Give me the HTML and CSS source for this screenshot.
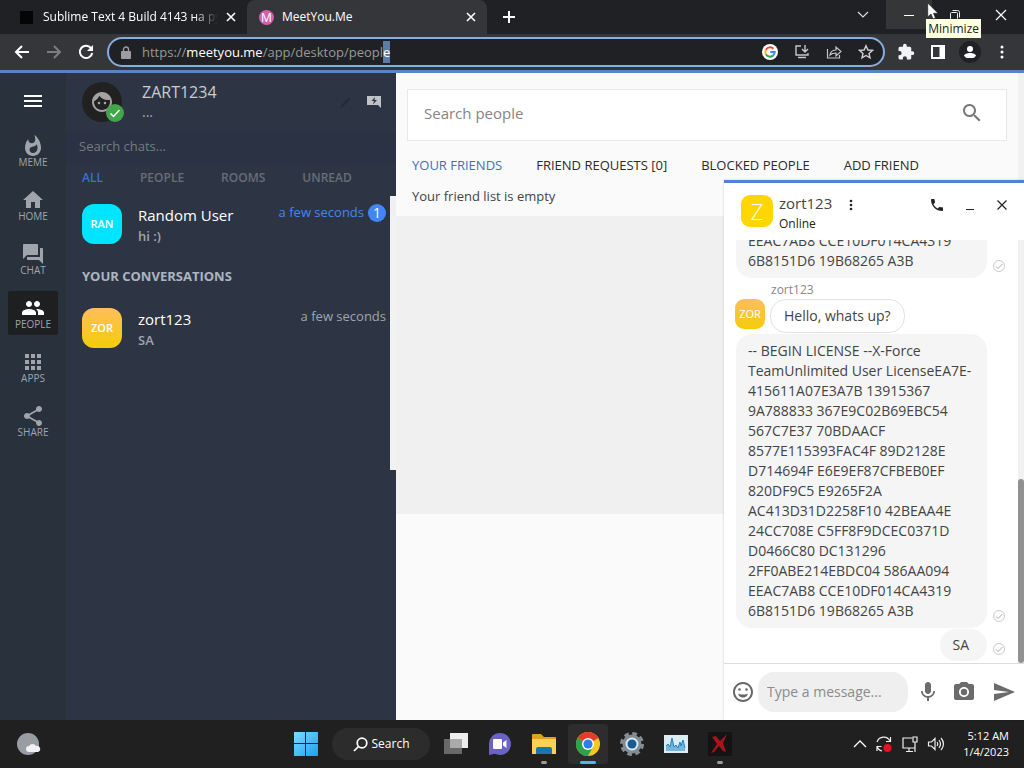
FILE: index.html
```html
<!DOCTYPE html>
<html lang="en">
<head>
  <meta charset="UTF-8">
  <title>MeetYou.Me</title>
  <link rel="stylesheet" href="styles.css">
</head>
<body>
  <!-- browser tabs -->
  <div class="tabstrip">
    <div class="tab">
      <span class="favicon dark"></span>
      <span class="tab-title fade">Sublime Text 4 Build 4143 на русском</span>
      <button class="tab-close" aria-label="Close tab"><svg width="10" height="10" viewBox="0 0 10 10"><path d="M1 1l8 8M9 1L1 9" stroke="#fff" stroke-width="1.6"/></svg></button>
    </div>
    <div class="tab active">
      <span class="favicon pink">M</span>
      <span class="tab-title">MeetYou.Me</span>
      <button class="tab-close" aria-label="Close tab"><svg width="10" height="10" viewBox="0 0 10 10"><path d="M1 1l8 8M9 1L1 9" stroke="#fff" stroke-width="1.6"/></svg></button>
    </div>
    <button class="new-tab" aria-label="New tab"><svg width="12" height="12" viewBox="0 0 12 12"><path d="M6 0v12M0 6h12" stroke="#fff" stroke-width="2"/></svg></button>
    <div class="window-buttons">
      <button aria-label="Search tabs"><svg width="12" height="12" viewBox="0 0 12 12" fill="none"><path d="M1 3l5 5 5-5" stroke="#ddd" stroke-width="1.2"/></svg></button>
      <button class="hovered" aria-label="Minimize"><svg width="12" height="12" viewBox="0 0 12 12"><path d="M1 6.500h10" stroke="#fff"/></svg></button>
      <button aria-label="Restore"><svg width="12" height="12" viewBox="0 0 12 12" fill="none" stroke="#eee"><rect x="1.500" y="3.500" width="7" height="7" rx="1"/><path d="M3.500 1.500h5a2 2 0 0 1 2 2v5"/></svg></button>
      <button aria-label="Close"><svg width="12" height="12" viewBox="0 0 12 12"><path d="M1 1l10 10M11 1L1 11" stroke="#fff" stroke-width="1.200"/></svg></button>
      <span class="tooltip">Minimize</span>
      <svg class="cursor" width="13" height="18" viewBox="0 0 13 18"><path d="M.7 1v14l3.300-3 2 5 2.500-1-2-4.700h4.600z" fill="#fff" stroke="#222" stroke-width=".7"/></svg>
    </div>
  </div>

  <div class="toolbar">
    <button aria-label="Back"><svg width="16" height="16" viewBox="0 0 16 16" fill="none" stroke="#fff" stroke-width="2"><path d="M15 8H2M8 2L2 8l6 6"/></svg></button>
    <button aria-label="Forward"><svg width="16" height="16" viewBox="0 0 16 16" fill="none" stroke="#7b7d80" stroke-width="2"><path d="M1 8h13M8 2l6 6-6 6"/></svg></button>
    <button aria-label="Reload"><svg width="16" height="16" viewBox="0 0 16 16" fill="none"><path d="M13.300 4.500A6.200 6.200 0 1 0 14.200 9" stroke="#fff" stroke-width="2"/><path d="M15 1v6H9z" fill="#fff"/></svg></button>
    <div class="address">
      <svg width="10" height="13" viewBox="0 0 10 13"><rect y="5" width="10" height="8" rx="1" fill="#9b9da1"/><path d="M2.500 5V3.500a2.500 2.500 0 0 1 5 0V5" fill="none" stroke="#9b9da1" stroke-width="1.400"/></svg>
      <div class="url" role="textbox" contenteditable="true" spellcheck="false" aria-label="Address">https://<b>meetyou.me</b>/app/desktop/peopl<mark>e</mark></div>
      <button aria-label="Google"><svg width="16" height="16" viewBox="0 0 16 16" fill="none" stroke-width="2"><circle cx="8" cy="8" r="8" fill="#fff"/><path d="M11.300 4.700A4.700 4.700 0 0 0 3.900 5.700" stroke="#ea4335"/><path d="M3.900 5.700a4.700 4.700 0 0 0 0 4.600" stroke="#fbbc05"/><path d="M3.900 10.300a4.700 4.700 0 0 0 7 1.300" stroke="#34a853"/><path d="M10.900 11.600A4.700 4.700 0 0 0 12.700 8H8.300" stroke="#4285f4"/></svg></button>
      <button aria-label="Install"><svg width="16" height="16" viewBox="0 0 16 16" fill="none" stroke="#c4c7c9" stroke-width="1.400"><path d="M7 2H2v9h12V9M11 1v6M8 5l3 3 3-3M4 13.500h8"/></svg></button>
      <button aria-label="Share page"><svg width="16" height="16" viewBox="0 0 16 16" fill="none" stroke="#c4c7c9" stroke-width="1.200"><path d="M1.500 5v9h12v-3M4 11c.5-3.500 3-5 6-5V3l5 4.500L10 12V9c-3 0-4.500.5-6 2z"/></svg></button>
      <button aria-label="Bookmark"><svg width="16" height="16" viewBox="0 0 16 16" fill="none" stroke="#d0d2d4" stroke-width="1.400"><path d="M8 1.800l1.900 4.200 4.500.4-3.400 3 1 4.500L8 11.500l-4 2.400 1-4.500-3.400-3 4.500-.4z"/></svg></button>
    </div>
    <button aria-label="Extensions"><svg width="18" height="18" viewBox="0 0 24 24" fill="#f1f3f4"><path d="M20.500 11H19V7a2 2 0 0 0-2-2h-4V3.500a2.500 2.500 0 0 0-5 0V5H4a2 2 0 0 0-2 2v3.800h1.500a2.700 2.700 0 0 1 0 5.400H2V20a2 2 0 0 0 2 2h3.800v-1.500a2.700 2.700 0 0 1 5.400 0V22H17a2 2 0 0 0 2-2v-4h1.500a2.500 2.500 0 0 0 0-5z"/></svg></button>
    <button aria-label="Side panel"><svg width="14" height="14" viewBox="0 0 14 14"><path d="M1 1h12v12H1z" fill="none" stroke="#fff" stroke-width="2"/><path d="M8.500 1H13v12H8.500z" fill="#fff"/></svg></button>
    <button class="profile" aria-label="Profile"><svg width="14" height="14" viewBox="0 0 14 14" fill="#fff"><circle cx="7" cy="4" r="3"/><path d="M1 13v-2c0-2 3-3 6-3s6 1 6 3v2z"/></svg></button>
    <button aria-label="Menu"><svg width="4" height="14" viewBox="0 0 4 14" fill="#fff"><circle cx="2" cy="2" r="1.500"/><circle cx="2" cy="7" r="1.500"/><circle cx="2" cy="12" r="1.500"/></svg></button>
  </div>

  <div class="app">
    <nav class="rail">
      <button class="burger" aria-label="Menu"><span></span><span></span><span></span></button>
      <a href="#"><svg viewBox="0 0 24 24"><path d="M13.500.67s.74 2.650.74 4.800c0 2.060-1.350 3.730-3.410 3.730-2.070 0-3.630-1.670-3.630-3.730l.03-.36C5.210 7.510 4 10.620 4 14c0 4.420 3.580 8 8 8s8-3.580 8-8C20 8.610 17.410 3.800 13.500.67zM11.710 19c-1.780 0-3.220-1.400-3.220-3.140 0-1.620 1.050-2.760 2.810-3.120 1.770-.36 3.600-1.210 4.620-2.580.39 1.290.59 2.650.59 4.040 0 2.650-2.150 4.800-4.800 4.800z"/></svg>MEME</a>
      <a href="#"><svg viewBox="0 0 24 24"><path d="M10 20v-6h4v6h5v-8h3L12 3 2 12h3v8z"/></svg>HOME</a>
      <a href="#"><svg viewBox="0 0 24 24"><path d="M21 6h-2v9H6v2c0 .55.45 1 1 1h11l4 4V7c0-.55-.45-1-1-1zm-4 6V3c0-.55-.45-1-1-1H3c-.55 0-1 .45-1 1v14l4-4h10c.55 0 1-.45 1-1z"/></svg>CHAT</a>
      <a href="#" class="current"><svg viewBox="0 0 24 24"><path d="M16 11c1.660 0 2.990-1.340 2.990-3S17.660 5 16 5s-3 1.340-3 3 1.340 3 3 3zm-8 0c1.660 0 2.990-1.340 2.990-3S9.660 5 8 5 5 6.340 5 8s1.340 3 3 3zm0 2c-2.330 0-7 1.170-7 3.500V19h14v-2.500c0-2.330-4.670-3.500-7-3.500zm8 0c-.29 0-.62.02-.97.05 1.160.84 1.970 1.970 1.970 3.450V19h6v-2.500c0-2.330-4.670-3.500-7-3.500z"/></svg>PEOPLE</a>
      <a href="#"><svg viewBox="0 0 24 24"><path d="M4 8h4V4H4v4zm6 12h4v-4h-4v4zm-6 0h4v-4H4v4zm0-6h4v-4H4v4zm6 0h4v-4h-4v4zm6-10v4h4V4h-4zm-6 4h4V4h-4v4zm6 6h4v-4h-4v4zm0 6h4v-4h-4v4z"/></svg>APPS</a>
      <a href="#"><svg viewBox="0 0 24 24"><path d="M18 16.080c-.76 0-1.440.3-1.960.77L8.910 12.700c.05-.23.09-.46.09-.7s-.04-.47-.09-.7l7.050-4.110c.54.5 1.250.81 2.040.81 1.660 0 3-1.340 3-3s-1.340-3-3-3-3 1.340-3 3c0 .24.04.47.09.7L8.040 9.810C7.500 9.310 6.790 9 6 9c-1.660 0-3 1.340-3 3s1.340 3 3 3c.79 0 1.500-.31 2.040-.81l7.120 4.160c-.05.21-.08.43-.08.65 0 1.610 1.310 2.920 2.920 2.920s2.920-1.310 2.920-2.920-1.310-2.920-2.920-2.920z"/></svg>SHARE</a>
    </nav>

    <aside class="sidebar">
      <div class="me">
        <div class="me-avatar">
          <svg width="24" height="24" viewBox="0 0 24 24" fill="#a3a3a3"><path d="M9 11.750c-.69 0-1.250.56-1.250 1.250s.56 1.250 1.250 1.250 1.250-.56 1.250-1.250-.56-1.250-1.250-1.250zm6 0c-.69 0-1.250.56-1.250 1.250s.56 1.250 1.250 1.250 1.250-.56 1.250-1.250-.56-1.250-1.250-1.250zM12 2C6.480 2 2 6.480 2 12s4.480 10 10 10 10-4.480 10-10S17.520 2 12 2zm0 18c-4.410 0-8-3.590-8-8 0-.29.02-.58.05-.86 2.360-1.050 4.230-2.980 5.210-5.370C11.070 8.330 14.050 10 17.420 10c.78 0 1.530-.09 2.250-.26.21.71.33 1.470.33 2.260 0 4.410-3.590 8-8 8z"/></svg>
          <span class="online"><svg width="12" height="12" viewBox="0 0 12 12"><path d="M1.500 6.500l3 3 6-6.500" fill="none" stroke="#fff" stroke-width="1.500"/></svg></span>
        </div>
        <div class="me-text"><span class="me-name">ZART1234</span><span class="me-status">...</span></div>
        <button aria-label="Edit"><svg width="14" height="14" viewBox="0 0 14 14"><path d="M2 12l9-9" stroke="#222a33" stroke-width="2"/></svg></button>
        <button aria-label="Quick message"><svg width="16" height="14" viewBox="0 0 16 14"><path d="M1 1h14v12l-3-3H1z" fill="#c0c3c6"/><path d="M9 2L5.500 6H8l-1 3.500L11 5H8.500z" fill="#2d3545"/></svg></button>
      </div>
      <input class="search-chats" type="text" placeholder="Search chats..." aria-label="Search chats">
      <div class="chat-tabs">
        <button class="selected">ALL</button>
        <button>PEOPLE</button>
        <button>ROOMS</button>
        <button>UNREAD</button>
      </div>
      <div class="chat-list">
        <div class="chats">
          <div class="chat">
            <span class="square cyan">RAN</span>
            <div class="chat-text"><strong>Random User</strong><span>hi :)</span></div>
            <span class="time new">a few seconds</span>
            <span class="count">1</span>
          </div>
          <h2>YOUR CONVERSATIONS</h2>
          <div class="chat">
            <span class="square gold">ZOR</span>
            <div class="chat-text"><strong>zort123</strong><span>SA</span></div>
            <span class="time">a few seconds</span>
          </div>
        </div>
        <div class="track"></div>
      </div>
    </aside>

    <main class="people">
      <div class="people-search">
        <input type="text" placeholder="Search people" aria-label="Search people">
        <button aria-label="Search"><svg width="24" height="24" viewBox="0 0 24 24" fill="#777"><path d="M15.500 14h-.79l-.28-.27C15.410 12.590 16 11.110 16 9.500 16 5.910 13.090 3 9.500 3S3 5.910 3 9.500 5.910 16 9.500 16c1.610 0 3.090-.59 4.230-1.570l.27.28v.79l5 4.990L20.490 19l-4.990-5zm-6 0C7.010 14 5 11.990 5 9.500S7.010 5 9.500 5 14 7.010 14 9.500 11.990 14 9.500 14z"/></svg></button>
      </div>
      <div class="people-tabs">
        <button class="selected">YOUR FRIENDS</button>
        <button>FRIEND REQUESTS [0]</button>
        <button>BLOCKED PEOPLE</button>
        <button>ADD FRIEND</button>
      </div>
      <p class="empty">Your friend list is empty</p>
      <div class="placeholder"></div>
    </main>

    <!-- floating conversation -->
    <section class="popup">
      <header>
        <span class="square yellow">Z</span>
        <div class="who"><span class="who-name">zort123</span><span class="who-status">Online</span></div>
        <button aria-label="More"><svg width="4" height="12" viewBox="0 0 4 12" fill="#222"><circle cx="2" cy="2" r="1.300"/><circle cx="2" cy="6" r="1.300"/><circle cx="2" cy="10" r="1.300"/></svg></button>
        <button class="call" aria-label="Call"><svg width="16" height="16" viewBox="0 0 24 24" fill="#222"><path d="M6.620 10.790c1.440 2.830 3.760 5.140 6.590 6.590l2.200-2.200c.27-.27.67-.36 1.020-.24 1.120.37 2.330.57 3.570.57.55 0 1 .45 1 1V20c0 .55-.45 1-1 1-9.390 0-17-7.610-17-17 0-.55.45-1 1-1h3.500c.55 0 1 .45 1 1 0 1.250.2 2.450.57 3.570.11.35.03.74-.25 1.020l-2.200 2.200z"/></svg></button>
        <button aria-label="Minimize chat"><svg width="10" height="12" viewBox="0 0 10 12"><path d="M1 10.500h8" stroke="#222"/></svg></button>
        <button aria-label="Close chat"><svg width="10" height="10" viewBox="0 0 10 10"><path d="M.5.5l9 9M9.500.5l-9 9" stroke="#222" stroke-width="1.200"/></svg></button>
      </header>
      <div class="messages">
        <div class="thread">
          <div class="mine">
            <p class="bubble wide">EEAC7AB8 CCE10DF014CA4319
6B8151D6 19B68265 A3B</p>
            <svg class="seen" width="14" height="14" viewBox="0 0 14 14" fill="none" stroke="#aaa"><circle cx="7" cy="7" r="5.500" stroke="#ccc"/><path d="M4 7.500l2 2L10.500 5"/></svg>
          </div>
          <span class="sender">zort123</span>
          <div class="theirs">
            <span class="square gold small">ZOR</span>
            <p class="bubble">Hello, whats up?</p>
          </div>
          <div class="mine">
            <p class="bubble wide">-- BEGIN LICENSE --X-Force
TeamUnlimited User LicenseEA7E-
415611A07E3A7B 13915367
9A788833 367E9C02B69EBC54
567C7E37 70BDAACF
8577E115393FAC4F 89D2128E
D714694F E6E9EF87CFBEB0EF
820DF9C5 E9265F2A
AC413D31D2258F10 42BEAA4E
24CC708E C5FF8F9DCEC0371D
D0466C80 DC131296
2FF0ABE214EBDC04 586AA094
EEAC7AB8 CCE10DF014CA4319
6B8151D6 19B68265 A3B</p>
            <svg class="seen" width="14" height="14" viewBox="0 0 14 14" fill="none" stroke="#aaa"><circle cx="7" cy="7" r="5.500" stroke="#ccc"/><path d="M4 7.500l2 2L10.500 5"/></svg>
          </div>
          <div class="mine">
            <p class="bubble short">SA</p>
            <svg class="seen" width="14" height="14" viewBox="0 0 14 14" fill="none" stroke="#aaa"><circle cx="7" cy="7" r="5.500" stroke="#ccc"/><path d="M4 7.500l2 2L10.500 5"/></svg>
          </div>
        </div>
        <div class="scrollbar"><span></span></div>
      </div>
      <form class="compose">
        <button type="button" aria-label="Emoji"><svg width="24" height="24" viewBox="0 0 24 24" fill="#666"><path d="M11.990 2C6.470 2 2 6.480 2 12s4.470 10 9.990 10C17.520 22 22 17.520 22 12S17.520 2 11.990 2zM12 20c-4.420 0-8-3.580-8-8s3.580-8 8-8 8 3.580 8 8-3.580 8-8 8z"/><circle cx="8.500" cy="9.500" r="1.300"/><circle cx="15.500" cy="9.500" r="1.300"/><path d="M7 13.500c1.500 1.300 8.500 1.300 10 0-.5 2.500-2.500 4-5 4s-4.500-1.500-5-4z"/></svg></button>
        <input type="text" placeholder="Type a message..." aria-label="Type a message">
        <button type="button" aria-label="Record"><svg width="24" height="24" viewBox="0 0 24 24" fill="#6b6b6b"><path d="M12 14c1.660 0 2.990-1.340 2.990-3L15 5c0-1.660-1.340-3-3-3S9 3.340 9 5v6c0 1.660 1.340 3 3 3zm5.300-3c0 3-2.540 5.100-5.300 5.100S6.700 14 6.700 11H5c0 3.410 2.720 6.230 6 6.720V21h2v-3.280c3.280-.48 6-3.300 6-6.720h-1.700z"/></svg></button>
        <button type="button" aria-label="Photo"><svg width="24" height="24" viewBox="0 0 24 24" fill="#6b6b6b"><circle cx="12" cy="12" r="3.200"/><path d="M9 2L7.170 4H4c-1.100 0-2 .9-2 2v12c0 1.100.9 2 2 2h16c1.100 0 2-.9 2-2V6c0-1.100-.9-2-2-2h-3.170L15 2H9zm3 15c-2.760 0-5-2.240-5-5s2.240-5 5-5 5 2.240 5 5-2.240 5-5 5z"/></svg></button>
        <button type="submit" aria-label="Send"><svg width="24" height="24" viewBox="0 0 24 24" fill="#6b6b6b"><path d="M2.010 21L23 12 2.010 3 2 10l15 2-15 2z"/></svg></button>
      </form>
    </section>
  </div>

  <footer class="taskbar">
    <button class="weather" aria-label="Weather"><svg width="24" height="24" viewBox="0 0 24 24"><circle cx="11" cy="12" r="11" fill="#9a9ca4"/><path d="M12 20a3 3 0 0 1 0-6 4 4 0 0 1 7 0 3 3 0 0 1 2 6z" fill="#f1f1f4"/></svg></button>
    <div class="pinned">
      <button aria-label="Start"><svg width="24" height="24" viewBox="0 0 24 24"><defs><linearGradient id="win" x1="0" y1="0" x2="1" y2="1"><stop offset="0" stop-color="#7bdcff"/><stop offset="1" stop-color="#1a9ff0"/></linearGradient></defs><path d="M0 0h11v11H0zM12 0h12v11H12zM0 12h11v12H0zM12 12h12v12H12z" fill="url(#win)"/></svg></button>
      <button class="search-pill"><svg width="15" height="15" viewBox="0 0 15 15" fill="none" stroke="#fff" stroke-width="1.700"><circle cx="9" cy="6" r="4.800"/><path d="M5.500 9.500L1 14"/></svg>Search</button>
      <button aria-label="Task view"><svg width="24" height="24" viewBox="0 0 24 24"><path d="M6 1h18v15H6z" fill="#ededed"/><path d="M0 7h18v15H0z" fill="#777" fill-opacity=".85"/><path d="M6 7h12v9H6z" fill="#aaa"/></svg></button>
      <button aria-label="Chat"><svg width="24" height="24" viewBox="0 0 24 24"><path d="M12 1a11 11 0 1 1-5 20.800L1 23V12A11 11 0 0 1 12 1z" fill="#6a63c4"/><rect x="5" y="7" width="9" height="10" rx="1" fill="#fff"/><path d="M15 10.500L18.500 8v8L15 13.500z" fill="#fff"/></svg></button>
      <button class="open" aria-label="File Explorer"><svg width="24" height="24" viewBox="0 0 24 24"><path d="M0 3a1 1 0 0 1 1-1h8l3 3h11a1 1 0 0 1 1 1v6H0z" fill="#e0a21c"/><path d="M0 7h24v15H0z" fill="#fbd153"/><path d="M4 22v-5a2 2 0 0 1 2-2h12a2 2 0 0 1 2 2v5z" fill="#1475b8"/></svg></button>
      <button class="open focused" aria-label="Chrome"><svg width="24" height="24" viewBox="0 0 24 24"><circle cx="12" cy="12" r="12" fill="#f9c81e"/><path d="M12 12L1.600 6A12 12 0 0 1 22.400 6z" fill="#e33b2e"/><path d="M12 12L1.600 6A12 12 0 0 0 12 24l5-9z" fill="#2da14c"/><circle cx="12" cy="12" r="6" fill="#fff"/><circle cx="12" cy="12" r="4.600" fill="#2f7de9"/></svg></button>
      <button aria-label="Settings"><svg width="24" height="24" viewBox="0 0 24 24"><circle cx="12" cy="12" r="10" fill="none" stroke="#858b92" stroke-width="4" stroke-dasharray="4.500 3.350"/><circle cx="12" cy="12" r="9.500" fill="#858b92"/><circle cx="12" cy="12" r="6.500" fill="#d8e9f5"/><circle cx="12" cy="12" r="4.500" fill="#175b93"/></svg></button>
      <button aria-label="Performance"><svg width="24" height="20" viewBox="0 0 24 20"><path d="M0 1h24v18H0z" fill="#dcecf6"/><path d="M2 17v-5l2-2 2 3 2-9 2 9 2-2 2 3 2-6 1 4 2-6 2 8v3z" fill="#72b5df"/><path d="M2 12l2-2 2 3 2-9 2 9 2-2 2 3 2-6 1 4 2-6 2 8" fill="none" stroke="#2680b8"/></svg></button>
      <button class="open" aria-label="Game"><svg width="24" height="24" viewBox="0 0 24 24"><path d="M0 0h24v24H0z" fill="#151313"/><path d="M4 5l4-1 4 5 7-7-4 9 3 9-3-1-4-5-5 6-3 1 6-9z" fill="#a5151b"/></svg></button>
    </div>
    <div class="tray">
      <button aria-label="Hidden icons"><svg width="14" height="10" viewBox="0 0 14 10"><path d="M1 8l6-6 6 6" fill="none" stroke="#fff" stroke-width="1.300"/></svg></button>
      <button aria-label="Updates"><svg width="18" height="18" viewBox="0 0 18 18" fill="none" stroke="#eee" stroke-width="1.200"><path d="M2 7a7 7 0 0 1 13-1M15.500 2v4.500H11M2 11a7 7 0 0 0 5 5M2 16v-4.500h4.500"/><circle cx="12.500" cy="13" r="4" fill="#e81123" stroke="none"/></svg></button>
      <button aria-label="Network"><svg width="18" height="18" viewBox="0 0 18 18" fill="none" stroke="#eee" stroke-width="1.200"><path d="M11 3H2v10h12V9M8 13v3M5 16.500h7M12 2h4v5h-4zM14 7v10"/></svg></button>
      <button aria-label="Volume"><svg width="18" height="16" viewBox="0 0 18 16" fill="none" stroke="#eee" stroke-width="1.200"><path d="M1.500 6v4h3l3.500 3.500v-11L4.500 6zM10 6q1.500 2 0 4M12 4q3 4 0 8M14 2q5 6 0 12"/></svg></button>
      <div class="clock"><span>5:12 AM</span><span>1/4/2023</span></div>
    </div>
  </footer>
</body>
</html>
```
FILE: styles.css
```css
* {
  box-sizing: border-box;
}

body {
  margin: 0;
  height: 100vh;
  display: flex;
  flex-direction: column;
  overflow: hidden;
  font-family: "Open Sans", "Noto Sans", sans-serif;
  font-size: 14px;
  line-height: 20px;
  color: #444;
  background: #202124;
}

button {
  display: flex;
  align-items: center;
  justify-content: center;
  padding: 0;
  border: none;
  background: none;
  font: inherit;
  color: inherit;
  cursor: pointer;
}

input {
  min-width: 0;
  border: none;
  outline: none;
  font: inherit;
}

p,
h2 {
  margin: 0;
}

svg {
  display: block;
  flex: none;
}

/* tabs */
.tabstrip {
  flex: none;
  display: flex;
  height: 34px;
  background: #202124;
  color: #fff;
  font-size: 12px;
}

.tab {
  display: flex;
  align-items: center;
  flex: 0 1 247px;
  min-width: 0;
  padding: 0 11px 0 20px;
  gap: 8px;
}

.tab.active {
  flex-basis: 240px;
  padding-left: 12px;
  background: #35363a;
  border-radius: 8px 8px 0 0;
}

.favicon {
  flex: none;
  width: 15px;
  height: 15px;
  line-height: 15px;
  text-align: center;
}

.favicon.dark {
  width: 13px;
  height: 13px;
  background: #050506;
}

.favicon.pink {
  border-radius: 50%;
  background: #d55fa8;
}

.tab-title {
  flex: 1;
  min-width: 0;
  overflow: hidden;
  white-space: nowrap;
}

.tab-title.fade {
  margin-left: 2px;
  mask-image: linear-gradient(to left, transparent, #000 24px);
}

.new-tab {
  width: 44px;
}

.window-buttons {
  position: relative;
  display: flex;
  margin-left: auto;
  height: 29px;
}

.window-buttons button {
  width: 46px;
}

.window-buttons .hovered {
  background: #343638;
}

.tooltip {
  position: absolute;
  top: 19px;
  right: 43px;
  padding: 0 2px;
  height: 19px;
  line-height: 19px;
  background: #ffffe1;
  color: #222;
  font-size: 12px;
}

.cursor {
  position: absolute;
  top: 2px;
  right: 84px;
}

/* toolbar */
.toolbar {
  flex: none;
  display: flex;
  align-items: center;
  height: 39px;
  padding: 0 6px;
  background: #35363a;
  border-bottom: 3px solid #5884c4;
}

.toolbar > button {
  width: 32px;
  height: 28px;
}

.address {
  flex: 1;
  display: flex;
  align-items: center;
  height: 30px;
  margin: 0 5px;
  padding: 0 9px 0 12px;
  border: 2px solid #8aade0;
  border-radius: 15px;
  background: #202124;
}

.address button {
  width: 32px;
}

.address button:last-child {
  width: 16px;
  margin-left: 8px;
}

.url {
  flex: 1;
  margin-left: 11px;
  outline: none;
  color: #96999d;
  font-size: 13px;
  white-space: nowrap;
}

.url b {
  font-weight: 400;
  color: #fff;
}

.url mark {
  padding: 2px 0;
  background: #5c7ba6;
  color: #fff;
}

.profile svg {
  padding: 4px;
  width: 22px;
  height: 22px;
  border-radius: 50%;
  background: #202124;
}

/* app */
.app {
  position: relative;
  flex: 1;
  min-height: 0;
  display: flex;
}

.rail {
  flex: none;
  width: 66px;
  display: flex;
  flex-direction: column;
  align-items: center;
  gap: 10px;
  background: #28313c;
}

.burger {
  flex-direction: column;
  gap: 3px;
  height: 24px;
  margin: 16px 0 6px;
}

.burger span {
  width: 18px;
  height: 2px;
  background: #fff;
}

.rail a {
  display: flex;
  flex-direction: column;
  align-items: center;
  width: 50px;
  height: 44px;
  padding-top: 5px;
  border-radius: 2px;
  color: #a0a5ab;
  font-size: 10px;
  line-height: 12px;
  text-decoration: none;
}

.rail a svg {
  width: 24px;
  height: 24px;
  margin-bottom: -2px;
  fill: currentColor;
}

.rail a.current {
  background: #1e1f20;
}

.rail a.current svg {
  fill: #fff;
}

.sidebar {
  flex: none;
  width: 330px;
  background: #2d3545;
  color: #a0a5ad;
}

.me {
  display: flex;
  align-items: center;
  height: 58px;
  padding: 0 8px 0 16px;
}

.me-avatar {
  position: relative;
  display: flex;
  align-items: center;
  justify-content: center;
  width: 40px;
  height: 40px;
  border-radius: 50%;
  background: #212121;
}

.online {
  position: absolute;
  right: -2px;
  bottom: 0;
  display: flex;
  padding: 3px;
  border-radius: 50%;
  background: #43a54c;
}

.me-text {
  flex: 1;
  display: flex;
  flex-direction: column;
  margin-left: 20px;
}

.me-name {
  font-size: 16px;
  color: #c9ccd0;
}

.me button {
  width: 28px;
}

.search-chats {
  display: block;
  width: 100%;
  height: 32px;
  padding: 0 13px 2px;
  background: #2b3243;
  color: #ccc;
  font-size: 13px;
}

.search-chats::placeholder {
  color: #767b84;
}

.chat-tabs {
  display: flex;
  gap: 37px;
  height: 33px;
  padding: 0 16px 4px;
  font-size: 12px;
  font-weight: 600;
  color: #686d76;
}

.chat-tabs .selected {
  color: #3a70d8;
}

.chat-list {
  display: flex;
  height: 274px;
}

.track {
  flex: none;
  width: 6px;
  background: #f1f1f1;
}

.chats {
  flex: 1;
  padding: 8px 4px 0 16px;
}

.chat {
  display: flex;
  height: 40px;
}

.square {
  flex: none;
  display: flex;
  align-items: center;
  justify-content: center;
  width: 40px;
  height: 40px;
  border-radius: 12px;
  color: #fff;
  font-size: 11px;
}

.cyan {
  background: #00e5ff;
}

.gold {
  background: linear-gradient(#ffbe5c, #f3cd08);
}

.yellow {
  width: 32px;
  height: 32px;
  border-radius: 9px;
  background: #ffd600;
  font-size: 22px;
  font-weight: 300;
}

.small {
  width: 30px;
  height: 30px;
  border-radius: 9px;
}

.chat .square {
  font-weight: 600;
}

.chat-text {
  flex: 1;
  display: flex;
  flex-direction: column;
  margin-left: 16px;
  font-size: 13px;
  font-weight: 600;
}

.chat-text strong {
  font-size: 15px;
  font-weight: 500;
  line-height: 22px;
  color: #fff;
}

.time {
  font-size: 13px;
  line-height: 16px;
}

.time.new {
  color: #4285f4;
}

.count {
  width: 18px;
  height: 18px;
  margin-left: 4px;
  border-radius: 50%;
  background: #4285f4;
  color: #fff;
  line-height: 18px;
  text-align: center;
}

.chats h2 {
  padding: 22px 0;
  font-size: 13px;
  font-weight: 700;
  line-height: 20px;
  color: #aeb5be;
}

.people {
  flex: 1;
  background: #fafafa;
  border-right: 6px solid #f1f1f1;
}

.people-search {
  display: flex;
  align-items: center;
  height: 52px;
  margin: 16px 11px 0;
  padding: 0 22px 4px 16px;
  border: 1px solid #e8e8e8;
  background: #fff;
}

.people-search input {
  flex: 1;
  padding: 0;
  font-size: 15px;
}

.people-search input::placeholder {
  color: #858585;
}

.people-tabs {
  display: flex;
  gap: 34px;
  padding: 14px 16px 0;
  font-size: 13px;
  white-space: nowrap;
  color: #2b2b2b;
}

.people-tabs .selected {
  color: #3a72b8;
}

.empty {
  padding: 11px 16px 10px;
  font-size: 13px;
}

.placeholder {
  height: 298px;
  background: #f0f0f0;
}

/* floating chat */
.popup {
  position: absolute;
  right: 0;
  bottom: 0;
  display: flex;
  flex-direction: column;
  width: 300px;
  height: 540px;
  border-top: 3px solid #4f82d8;
  background: #fff;
  box-shadow: 0 0 2px rgba(0,0,0,0.2);
}

.popup header {
  flex: none;
  display: flex;
  height: 57px;
  padding: 9px 15px 0 17px;
}

.popup .yellow {
  margin-top: 3px;
}

.who {
  display: flex;
  flex-direction: column;
  margin: 0 12px 0 6px;
}

.who-name {
  font-size: 15px;
  line-height: 22px;
}

.who-status {
  font-size: 12px;
  color: #222;
}

.popup header button {
  width: 14px;
  height: 26px;
  margin-left: 18px;
}

.popup header .who + button {
  margin-left: 0;
}

.popup header .call {
  width: 16px;
  margin-left: auto;
}

.messages {
  flex: 1;
  min-height: 0;
  display: flex;
}

.thread {
  flex: 1;
  min-width: 0;
  display: flex;
  flex-direction: column;
  justify-content: flex-end;
  padding: 0 12px 2px 11px;
  overflow: hidden;
}

.mine,
.theirs {
  flex: none;
  display: flex;
  gap: 5px;
  margin-top: 1px;
}

.mine {
  justify-content: flex-end;
  align-items: flex-end;
}

.bubble {
  padding: 7px 12px;
  border-radius: 16px;
  background: #f5f5f5;
  font-size: 14px;
  line-height: 20px;
  white-space: pre-line;
}

.bubble.wide {
  flex: none;
  width: 251px;
}

.bubble.short {
  padding: 6px 18px 6px 12px;
}

.theirs .bubble {
  padding: 6px 13px;
  border: 1px solid #e2e2e2;
  background: #fff;
}

.seen {
  margin-bottom: 5px;
}

.sender {
  flex: none;
  padding: 4px 36px 0;
  font-size: 12px;
  line-height: 16px;
  color: #888;
}

.scrollbar {
  flex: none;
  display: flex;
  flex-direction: column;
  justify-content: flex-end;
  width: 6px;
  background: #f1f1f1;
}

.scrollbar span {
  height: 184px;
  border-radius: 3px;
  background: #919191;
}

.compose {
  flex: none;
  display: flex;
  align-items: center;
  gap: 12px;
  height: 57px;
  padding: 0 8px 0 7px;
  border-top: 1px solid #ddd;
}

.compose input {
  flex: 1;
  height: 40px;
  margin: 0 -4px 0 -9px;
  padding: 0 9px 2px;
  border-radius: 16px;
  background: #efefef;
}

.compose input::placeholder {
  color: #8b8b8b;
}

.compose button[type="submit"] {
  margin-left: 4px;
}

/* taskbar */
.taskbar {
  flex: none;
  display: grid;
  grid-template-columns: 1fr auto 1fr;
  align-items: center;
  height: 48px;
  padding: 0 15px 0 17px;
  background: #202020;
  color: #fff;
  font-size: 11px;
}

.weather {
  justify-self: start;
}

.pinned {
  display: flex;
  align-items: center;
}

.pinned button {
  width: 40px;
  height: 40px;
  margin: 0 2px;
  border-radius: 4px;
}

.pinned .search-pill {
  width: 98px;
  height: 32px;
  margin: 0 4px;
  gap: 4px;
  border-radius: 16px;
  background: #2c2c2c;
  font-size: 12px;
}

.pinned .open {
  flex-direction: column;
  justify-content: flex-end;
  gap: 5px;
}

.open::after {
  content: "";
  width: 6px;
  height: 3px;
  border-radius: 2px;
  background: #9a9a9a;
}

.pinned .focused {
  background: #2d2d2d;
}

.focused::after {
  width: 16px;
  background: #55b4ea;
}

.tray {
  display: flex;
  align-items: center;
  justify-content: flex-end;
  gap: 8px;
}

.clock {
  display: flex;
  flex-direction: column;
  margin-left: 10px;
  line-height: 16px;
  text-align: right;
}
```
